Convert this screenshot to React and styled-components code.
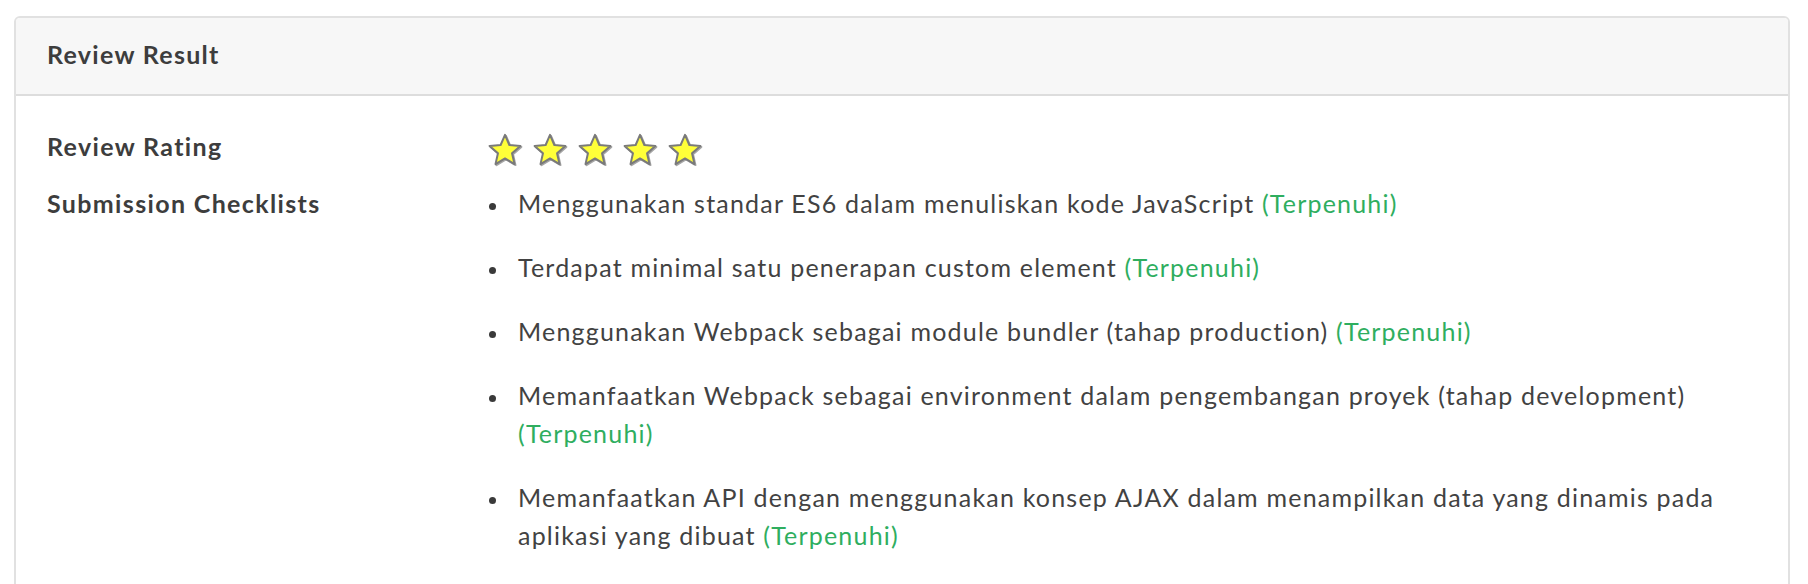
import React from 'react';
import styled, { createGlobalStyle } from 'styled-components';

const GlobalStyle = createGlobalStyle`
  html, body {
    margin: 0;
    background: #ffffff;
  }
  body {
    padding: 16px 18px 40px 14px;
    font-family: Lato, "Noto Sans", sans-serif;
    color: #404040;
  }
`;

const Card = styled.section`
  border: 2px solid #e1e1e1;
  border-radius: 6px;
  background: #ffffff;
  overflow: hidden;
`;

const CardHeader = styled.header`
  background: #f7f7f7;
  border-bottom: 2px solid #dddddd;
  padding: 21px 31px 25px;
`;

const CardTitle = styled.h2`
  margin: 0;
  font-size: 25px;
  line-height: 30px;
  font-weight: 700;
  letter-spacing: 1.3px;
  color: #3d3d3d;
`;

const CardBody = styled.div`
  display: grid;
  grid-template-columns: 440px 1fr;
  row-gap: 15px;
  padding: 31px 32px 40px 31px;
`;

const Label = styled.div`
  font-size: 25px;
  line-height: 38px;
  font-weight: 700;
  letter-spacing: 1.35px;
  color: #3d3d3d;
`;

const Stars = styled.div`
  display: flex;
  gap: 9px;
  padding-top: 6px;
  height: 36px;
`;

const StarIcon = styled.svg`
  width: 36px;
  height: 34px;
  filter: drop-shadow(1px 1.5px 0.6px rgba(0, 0, 0, 0.35));
`;

const Checklist = styled.ul`
  list-style: none;
  margin: 0;
  padding: 0;
  display: flex;
  flex-direction: column;
  gap: 26px;
`;

const ChecklistItem = styled.li`
  display: flex;
  font-size: 25px;
  line-height: 38px;
  letter-spacing: 1.2px;
  color: #424242;

  &::before {
    content: '';
    flex-shrink: 0;
    width: 7px;
    height: 7px;
    margin: 19px 22px 0 2px;
    border-radius: 50%;
    background: #3a3a3a;
  }
`;

const Status = styled.span`
  color: ${({ $done }) => ($done ? '#2fae5f' : '#d9534f')};
`;

const Star = () => (
  <StarIcon viewBox="0 0 36 34">
    <path
      d="M18 1.8 L22.35 12.01 L33.4 12.9 L25.04 20.29 L27.5 31.1 L18 25.4 L8.5 31.1 L10.96 20.29 L2.6 12.9 L13.65 12.01 Z"
      fill="#ffff38"
      stroke="#7a7a7a"
      strokeWidth="2"
      strokeLinejoin="round"
    />
  </StarIcon>
);

const checklists = [
  'Menggunakan standar ES6 dalam menuliskan kode JavaScript',
  'Terdapat minimal satu penerapan custom element',
  'Menggunakan Webpack sebagai module bundler (tahap production)',
  'Memanfaatkan Webpack sebagai environment dalam pengembangan proyek (tahap development)',
  'Memanfaatkan API dengan menggunakan konsep AJAX dalam menampilkan data yang dinamis pada aplikasi yang dibuat',
];

const App = () => {
  const rating = 5;

  return (
    <>
      <GlobalStyle />
      <Card>
        <CardHeader>
          <CardTitle>Review Result</CardTitle>
        </CardHeader>
        <CardBody>
          <Label>Review Rating</Label>
          <Stars>
            {Array.from({ length: rating }).map((_, i) => (
              <Star key={i} />
            ))}
          </Stars>

          <Label>Submission Checklists</Label>
          <Checklist>
            {checklists.map((item) => (
              <ChecklistItem key={item}>
                <span>
                  {item} <Status $done>(Terpenuhi)</Status>
                </span>
              </ChecklistItem>
            ))}
          </Checklist>
        </CardBody>
      </Card>
    </>
  );
};

export default App;
